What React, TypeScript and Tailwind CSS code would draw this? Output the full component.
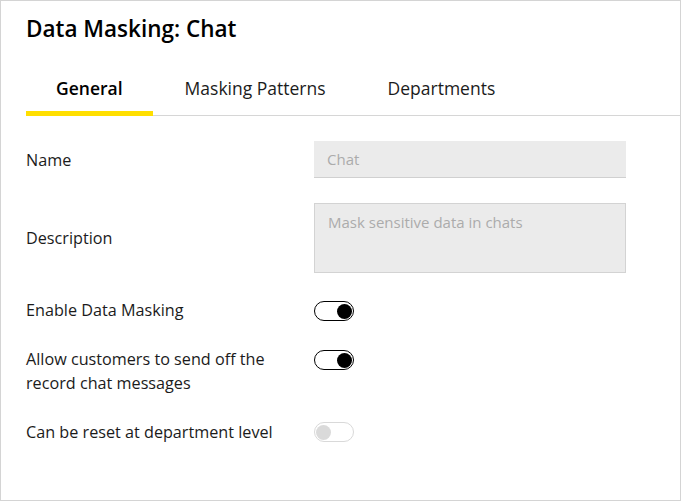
import { useState } from "react";

const TABS = ["General", "Masking Patterns", "Departments"];

function Toggle({ on, disabled }: { on: boolean; disabled?: boolean }) {
  return (
    <span
      className={
        "flex h-[20px] w-[40px] shrink-0 items-center rounded-full border-[1.5px] px-[1px] " +
        (disabled ? "border-[#d9d9d9] justify-start" : "border-black ") +
        (on ? " justify-end" : " justify-start")
      }
    >
      <span className={"h-[15px] w-[15px] rounded-full " + (disabled ? "bg-[#dadada]" : "bg-black")} />
    </span>
  );
}

export default function App() {
  const [tab] = useState("General");

  return (
    <div
      className="h-[501px] w-[681px] border border-[#d4d4d4] bg-white text-[#1b1b1b]"
      style={{ fontFamily: '"Open Sans", "Liberation Sans", sans-serif' }}
    >
      <h1 className="pl-[25px] pt-[13px] text-[22.5px] font-semibold leading-[30px] text-black">
        Data Masking: Chat
      </h1>

      {/* Tabs */}
      <div className="ml-[25px] mt-[18px] flex gap-[2px] border-b border-[#d6d6d6]">
        {TABS.map((t) => (
          <div
            key={t}
            className={
              "-mb-px border-b-[5px] px-[30px] pb-[11px] pt-[14px] text-[17.5px] leading-[24px] " +
              (t === tab ? "border-[#ffdf00] font-semibold text-black" : "border-transparent text-[#1b1b1b]")
            }
          >
            {t}
          </div>
        ))}
      </div>

      {/* Form */}
      <div className="flex flex-col gap-[25px] pl-[25px] pt-[25px] text-[16.2px] leading-[24px]">
        <div className="flex items-center">
          <span className="w-[288px]">Name</span>
          <div className="flex h-[37px] w-[312px] items-center border-b border-[#d0d0d0] bg-[#ebebeb] px-[13px] text-[15px] text-[#ababab]">
            Chat
          </div>
        </div>

        <div className="flex items-center">
          <span className="w-[288px]">Description</span>
          <div className="h-[70px] w-[312px] border border-[#d3d3d3] bg-[#ebebeb] px-[13px] pt-[7px] text-[15px] leading-[22px] text-[#ababab]">
            Mask sensitive data in chats
          </div>
        </div>

        <div className="flex items-start">
          <span className="w-[288px]">Enable Data Masking</span>
          <span className="mt-[3px]">
            <Toggle on />
          </span>
        </div>

        <div className="flex items-start">
          <span className="w-[288px] pr-[40px]">Allow customers to send off the record chat messages</span>
          <span className="mt-[3px]">
            <Toggle on />
          </span>
        </div>

        <div className="flex items-start">
          <span className="w-[288px]">Can be reset at department level</span>
          <span className="mt-[2px]">
            <Toggle on={false} disabled />
          </span>
        </div>
      </div>
    </div>
  );
}
